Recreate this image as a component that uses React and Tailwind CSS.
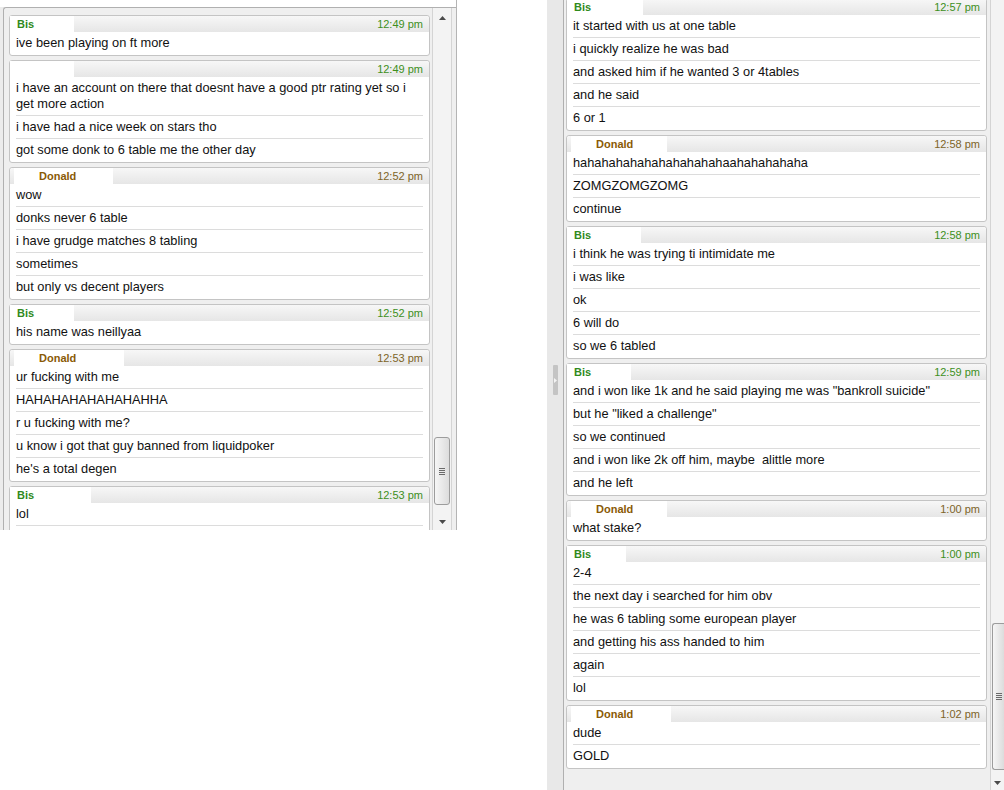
import React from 'react';

const leftMsgs = [
  { who: 'Bis', time: '12:49 pm', mask: 'w-[64px]', lines: ['ive been playing on ft more'] },
  {
    who: '',
    time: '12:49 pm',
    mask: 'w-[64px]',
    lines: [
      'i have an account on there that doesnt have a good ptr rating yet so i get more action',
      'i have had a nice week on stars tho',
      'got some donk to 6 table me the other day',
    ],
  },
  {
    who: 'Donald',
    time: '12:52 pm',
    mask: 'w-[99px]',
    lines: ['wow', 'donks never 6 table', 'i have grudge matches 8 tabling', 'sometimes', 'but only vs decent players'],
  },
  { who: 'Bis', time: '12:52 pm', mask: 'w-[64px]', lines: ['his name was neillyaa'] },
  {
    who: 'Donald',
    time: '12:53 pm',
    mask: 'w-[110px]',
    lines: [
      'ur fucking with me',
      'HAHAHAHAHAHAHAHHA',
      'r u fucking with me?',
      'u know i got that guy banned from liquidpoker',
      "he's a total degen",
    ],
  },
  { who: 'Bis', time: '12:53 pm', mask: 'w-[81px]', lines: ['lol', '\u00a0'] },
];

const rightMsgs = [
  {
    who: 'Bis',
    time: '12:57 pm',
    mask: 'w-[76px]',
    lines: ['it started with us at one table', 'i quickly realize he was bad', 'and asked him if he wanted 3 or 4tables', 'and he said', '6 or 1'],
  },
  {
    who: 'Donald',
    time: '12:58 pm',
    mask: 'w-[96px]',
    lines: ['hahahahahahahahahahahaahahahahaha', 'ZOMGZOMGZOMG', 'continue'],
  },
  {
    who: 'Bis',
    time: '12:58 pm',
    mask: 'w-[74px]',
    lines: ['i think he was trying ti intimidate me', 'i was like', 'ok', '6 will do', 'so we 6 tabled'],
  },
  {
    who: 'Bis',
    time: '12:59 pm',
    mask: 'w-[64px]',
    lines: [
      'and i won like 1k and he said playing me was "bankroll suicide"',
      'but he "liked a challenge"',
      'so we continued',
      'and i won like 2k off him, maybe \u00a0alittle more',
      'and he left',
    ],
  },
  { who: 'Donald', time: '1:00 pm', mask: 'w-[96px]', lines: ['what stake?'] },
  {
    who: 'Bis',
    time: '1:00 pm',
    mask: 'w-[59px]',
    lines: ['2-4', 'the next day i searched for him obv', 'he was 6 tabling some european player', 'and getting his ass handed to him', 'again', 'lol'],
  },
  { who: 'Donald', time: '1:02 pm', mask: 'w-[100px]', lines: ['dude', 'GOLD'] },
];

const Message = ({ msg }) => {
  const donald = msg.who === 'Donald';
  return (
    <div className="w-[421px] shrink-0 bg-white border border-[#c4c4c4] rounded-[3px] pb-[1px]">
      <div className="h-[16px] flex items-center bg-gradient-to-b from-[#f7f7f7] to-[#e6e6e6] rounded-t-[3px]">
        <div className={`h-full bg-white flex items-center ${msg.mask} ${donald ? 'ml-[4px] pl-[25px]' : 'pl-[7px]'}`}>
          <span className={`text-[11px] font-bold leading-none ${donald ? 'text-[#8a5a06]' : 'text-[#2f8a1c]'}`}>{msg.who}</span>
        </div>
        <span className={`ml-auto pr-[6px] text-[11px] leading-none ${donald ? 'text-[#7d6428]' : 'text-[#3d8f1c]'}`}>{msg.time}</span>
      </div>
      <div>
        {msg.lines.map((line, i) => (
          <div key={i} className="mx-[6px] border-t border-[#dcdcdc] first:border-t-0 py-[3px] text-[12.8px] leading-[16px] text-[#111111]">
            {line}
          </div>
        ))}
      </div>
    </div>
  );
};

const Up = () => (
  <svg width="7" height="4" viewBox="0 0 7 4">
    <polygon points="0,4 7,4 3.5,0" fill="#4a4a4a" />
  </svg>
);

const Down = () => (
  <svg width="7" height="4" viewBox="0 0 7 4">
    <polygon points="0,0 7,0 3.5,4" fill="#4a4a4a" />
  </svg>
);

const Grip = () => (
  <div className="flex flex-col gap-[1px]">
    <div className="w-[6px] h-[1px] bg-[#6a6a6a]" />
    <div className="w-[6px] h-[1px] bg-[#6a6a6a]" />
    <div className="w-[6px] h-[1px] bg-[#6a6a6a]" />
    <div className="w-[6px] h-[1px] bg-[#6a6a6a]" />
  </div>
);

const App = () => {
  return (
    <div className="w-[1004px] h-[790px] bg-white flex overflow-hidden" style={{ fontFamily: '"Liberation Sans", Arial, sans-serif' }}>
      {/* left window */}
      <div className="w-[460px] h-[530px] shrink-0 flex">
        <div className="w-[457px] h-full flex flex-col border-r border-[#b4b4b4] bg-[#ececec]">
          <div className="h-[7px] bg-white shrink-0" />
          <div className="flex-1 min-h-0 ml-[3px] flex border-t border-l border-[#b0b0b0] rounded-tl-[3px] bg-[#efefef] overflow-hidden">
            <div className="pl-[5px] pt-[7px] flex flex-col gap-[4px]">
              {leftMsgs.map((m, i) => (
                <Message key={i} msg={m} />
              ))}
            </div>
            <div className="w-[20px] ml-[2px] shrink-0 flex flex-col border-l border-r border-[#d4d4d4] bg-[#f3f3f3]">
              <div className="h-[17px] flex items-center justify-center pt-[2px]">
                <Up />
              </div>
              <div className="flex-1 px-[1px]">
                <div className="mt-[412px] h-[68px] rounded-[3px] border border-[#9c9c9c] bg-gradient-to-r from-[#f6f6f6] to-[#dcdcdc] flex items-center justify-center">
                  <Grip />
                </div>
              </div>
              <div className="h-[17px] flex items-center justify-center">
                <Down />
              </div>
            </div>
          </div>
        </div>
      </div>

      <div className="w-[87px] shrink-0" />

      {/* right window */}
      <div className="w-[457px] h-[790px] shrink-0 flex bg-[#ececec]">
        <div className="w-[16px] shrink-0 bg-[#e8e8e8] pt-[365px] pl-[6px]">
          <div className="w-[5px] h-[30px] bg-[#c4c4c4] rounded-[1px] flex items-center justify-center">
            <svg width="3" height="5" viewBox="0 0 3 5">
              <polygon points="0,0 3,2.5 0,5" fill="#f4f4f4" />
            </svg>
          </div>
        </div>
        <div className="w-[424px] shrink-0 border-l border-[#b0b0b0] bg-[#efefef] pl-[2px] overflow-hidden">
          <div className="-mt-[2px] flex flex-col gap-[4px]">
            {rightMsgs.map((m, i) => (
              <Message key={i} msg={m} />
            ))}
          </div>
        </div>
        <div className="w-[3px] shrink-0 bg-[#efefef]" />
        <div className="w-[14px] shrink-0 flex flex-col border-l border-[#d4d4d4] bg-[#f3f3f3]">
          <div className="flex-1 pl-[1px]">
            <div className="mt-[623px] h-[147px] rounded-l-[3px] border border-r-0 border-[#9c9c9c] bg-gradient-to-r from-[#f6f6f6] to-[#dcdcdc] flex items-center justify-center">
              <Grip />
            </div>
          </div>
          <div className="h-[15px] flex items-center justify-center">
            <Down />
          </div>
        </div>
      </div>
    </div>
  );
};

export default App;
